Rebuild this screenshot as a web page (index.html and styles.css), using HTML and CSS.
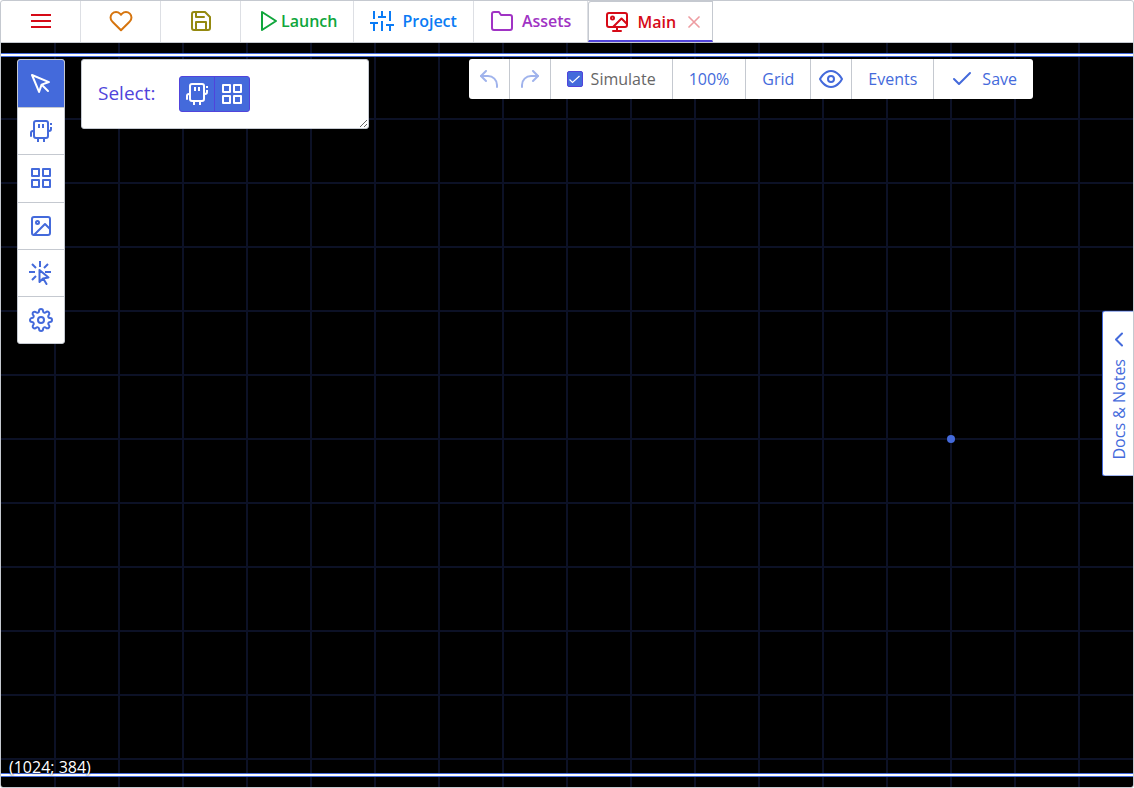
FILE: index.html
```html
<!DOCTYPE html>
<html lang="en">
<head>
<meta charset="utf-8">
<title>Main</title>
<link rel="stylesheet" href="styles.css">
</head>
<body>
<svg class="sprite" aria-hidden="true">
  <symbol id="robot" viewBox="0 0 24 24"><rect x="5" y="2" width="14" height="17" rx="2"/><path d="M5 12H4a2 2 0 0 0-2 2v3"/><path class="flat" d="M10 5v4M14 5v4M9 19v4M15 19v4M19 12h1a2 2 0 0 0 2-2V8M22 4v2"/></symbol>
  <symbol id="grid" viewBox="0 0 24 24"><path d="M3 3h7v7H3zM14 3h7v7h-7zM14 14h7v7h-7zM3 14h7v7H3z"/></symbol>
</svg>
<div class="app">
  <nav class="tabs">
    <button class="tab tab-icon red" aria-label="Menu"><svg class="icon" viewBox="0 0 24 24"><path class="flat" d="M2 6h20M2 12h20M2 18h20"/></svg></button>
    <button class="tab tab-icon orange" aria-label="Patrons"><svg class="icon" viewBox="0 0 24 24"><path d="M20.84 4.61a5.5 5.5 0 0 0-7.78 0L12 5.67l-1.06-1.06a5.5 5.5 0 0 0-7.78 7.78l1.06 1.06L12 21.23l7.78-7.78 1.06-1.06a5.5 5.5 0 0 0 0-7.78z"/></svg></button>
    <button class="tab tab-icon olive" aria-label="Save project"><svg class="icon" viewBox="0 0 24 24"><path d="M19 21H5a2 2 0 0 1-2-2V5a2 2 0 0 1 2-2h11l5 5v11a2 2 0 0 1-2 2z"/><path d="M17 21v-8H7v8M7 3v5h8"/></svg></button>
    <button class="tab tab-launch green"><svg class="icon" viewBox="0 0 24 24"><path d="M5 3l14 9-14 9z"/></svg>Launch</button>
    <button class="tab blue"><svg class="icon" viewBox="0 0 24 24"><path class="flat" d="M4 22v-8M4 10V2M12 22V12M12 8V2M20 22v-6M20 12V2M0 14h8M8 8h8M16 16h8"/></svg>Project</button>
    <button class="tab purple"><svg class="icon" viewBox="0 0 24 24"><path d="M22 19a2 2 0 0 1-2 2H4a2 2 0 0 1-2-2V5a2 2 0 0 1 2-2h5l2 3h9a2 2 0 0 1 2 2z"/></svg>Assets</button>
    <div class="tab tab-active red">
      <button class="tab-title"><svg class="icon" viewBox="0 0 24 24"><rect x="2" y="3" width="20" height="14" rx="2"/><circle cx="7.500" cy="8" r="1.500"/><path d="M8 17l8.500-8.500L22 14M12 17v4M8 21h8"/></svg>Main</button>
      <button class="close" aria-label="Close tab"><svg viewBox="0 0 24 24"><path d="M18 6L6 18M6 6l12 12"/></svg></button>
    </div>
  </nav>

  <main class="stage">
    <div class="camera"></div>
    <div class="origin"></div>

    <aside class="tools">
      <button class="tool active" aria-label="Select"><svg class="icon" viewBox="0 0 24 24"><path d="M3 3l7.070 16.970 2.510-7.390 7.390-2.510z"/><path d="M13 13l6 6"/></svg></button>
      <button class="tool" aria-label="Add copies"><svg class="icon"><use href="#robot"/></svg></button>
      <button class="tool" aria-label="Add tiles"><svg class="icon"><use href="#grid"/></svg></button>
      <button class="tool" aria-label="Backgrounds"><svg class="icon" viewBox="0 0 24 24"><rect x="3" y="3" width="18" height="18" rx="2"/><circle cx="8.500" cy="8.500" r="1.500"/><path d="M21 15l-5-5L5 21"/></svg></button>
      <button class="tool" aria-label="Interface tools"><svg class="icon" viewBox="0 0 24 24"><path class="flat" d="M11 0v6M0 11h6M16 11h6M3 3l4 4M15 7l4-4M3 19l4-4"/><path d="M10.500 9v12l3.500-3.500 5.500-1zM14.500 18l3 5"/></svg></button>
      <button class="tool" aria-label="Room settings"><svg class="icon" viewBox="0 0 24 24"><circle cx="12" cy="12" r="3"/><path d="M19.400 15a1.650 1.650 0 0 0 .33 1.820l.06.06a2 2 0 0 1 0 2.830 2 2 0 0 1-2.830 0l-.06-.06a1.650 1.650 0 0 0-1.820-.33 1.650 1.650 0 0 0-1 1.510V21a2 2 0 0 1-2 2 2 2 0 0 1-2-2v-.09A1.650 1.650 0 0 0 9 19.400a1.650 1.650 0 0 0-1.820.33l-.06.06a2 2 0 0 1-2.830 0 2 2 0 0 1 0-2.830l.06-.06a1.650 1.650 0 0 0 .33-1.820 1.650 1.650 0 0 0-1.510-1H3a2 2 0 0 1-2-2 2 2 0 0 1 2-2h.09A1.650 1.650 0 0 0 4.600 9a1.650 1.650 0 0 0-.33-1.820l-.06-.06a2 2 0 0 1 0-2.830 2 2 0 0 1 2.830 0l.06.06a1.650 1.650 0 0 0 1.820.33H9a1.650 1.650 0 0 0 1-1.510V3a2 2 0 0 1 2-2 2 2 0 0 1 2 2v.09a1.650 1.650 0 0 0 1 1.510 1.650 1.650 0 0 0 1.820-.33l.06-.06a2 2 0 0 1 2.830 0 2 2 0 0 1 0 2.830l-.06.06a1.650 1.650 0 0 0-.33 1.820V9a1.650 1.650 0 0 0 1.510 1H21a2 2 0 0 1 2 2 2 2 0 0 1-2 2h-.09a1.650 1.650 0 0 0-1.510 1z"/></svg></button>
    </aside>

    <section class="options">
      <span class="options-label">Select:</span>
      <div class="segmented">
        <button aria-pressed="true" aria-label="Copies"><svg class="icon"><use href="#robot"/></svg></button>
        <button aria-pressed="true" aria-label="Tiles"><svg class="icon"><use href="#grid"/></svg></button>
      </div>
    </section>

    <div class="toolbar">
      <button class="square" disabled aria-label="Undo"><svg class="icon" viewBox="0 0 24 24"><path d="M9 14L4 9l5-5"/><path d="M20 20v-2a9 9 0 0 0-9-9H4"/></svg></button>
      <button class="square" disabled aria-label="Redo"><svg class="icon" viewBox="0 0 24 24"><path d="M15 14l5-5-5-5"/><path d="M4 20v-2a9 9 0 0 1 9-9h7"/></svg></button>
      <label class="simulate" for="simulate"><input type="checkbox" id="simulate" checked>Simulate</label>
      <button>100%</button>
      <button>Grid</button>
      <button class="square" aria-label="Visibility"><svg class="icon" viewBox="0 0 24 24"><path d="M1 12s4-8 11-8 11 8 11 8-4 8-11 8-11-8-11-8z"/><circle cx="12" cy="12" r="3"/></svg></button>
      <button>Events</button>
      <button><svg class="icon" viewBox="0 0 24 24"><path d="M20 6L9 17l-5-5"/></svg>Save</button>
    </div>

    <button class="docs"><span>Docs &amp; Notes</span><svg class="icon" viewBox="0 0 24 24"><path d="M15 18l-6-6 6-6"/></svg></button>
    <output class="coords">(1024; 384)</output>
  </main>
</div>
</body>
</html>
```
FILE: styles.css
```css
:root {
  --accent: #446adb;
  --accent-2: #5144db;
  --line: #c5c9d0;
  --line-soft: #dddfe4;
  --grid: #0c1126;
}

* { box-sizing: border-box; }

body {
  margin: 0;
  font: 16px/24px "Open Sans", "Noto Sans", sans-serif;
  color: var(--accent);
  background: #fff;
}

button {
  margin: 0;
  padding: 0;
  border: 0;
  background: none;
  font: inherit;
  color: inherit;
}

svg {
  fill: none;
  stroke: currentColor;
  stroke-width: 2;
  stroke-linecap: round;
  stroke-linejoin: round;
}

.sprite { position: absolute; width: 0; height: 0; }
.icon { display: block; flex: none; width: 24px; height: 24px; }
.flat { stroke-linecap: butt; }

.app {
  display: flex;
  flex-direction: column;
  height: 100vh;
  border: 1px solid var(--line);
  border-radius: 3px;
  overflow: hidden;
}

/* Tab strip */
.tabs {
  display: flex;
  height: 42px;
  border-bottom: 1px solid var(--line);
  font-weight: 600;
}

.tab {
  display: flex;
  align-items: center;
  gap: 8px;
  padding: 0 16px 2px;
  border-right: 1px solid var(--line-soft);
}

.tab-icon { justify-content: center; width: 80px; }
.tab-launch { gap: 0; }

.tab-active {
  border: 1px solid var(--line);
  border-bottom: 2px solid var(--accent-2);
  border-top-left-radius: 3px;
  padding: 2px 8px 0 16px;
}

.tab-title { display: flex; align-items: center; gap: 8px; }
.close { opacity: 0.4; }
.close svg { display: block; width: 20px; height: 20px; }

.red { color: #d60a17; }
.orange { color: #d6750f; }
.olive { color: #94890f; }
.green { color: #10a63c; }
.blue { color: #0a7bf5; }
.purple { color: #a033c4; }

/* Room canvas */
.stage {
  position: relative;
  flex: 1;
  min-height: 0;
  overflow: hidden;
  background:
    linear-gradient(90deg, var(--grid) 2px, transparent 2px) 53px 0 / 64px 64px,
    linear-gradient(var(--grid) 2px, transparent 2px) 0 11px / 64px 64px,
    #000;
}

.camera {
  position: absolute;
  inset: 10px -8px;
  border: 1px solid var(--accent);
}

.camera::before {
  content: "";
  position: absolute;
  inset: 0;
  border: 2px solid #fff;
  outline: 1px solid var(--accent);
  outline-offset: -3px;
}

.origin {
  position: absolute;
  left: 946px;
  top: 392px;
  width: 8px;
  height: 8px;
  border-radius: 50%;
  background: var(--accent);
}

.tools {
  position: absolute;
  left: 16px;
  top: 16px;
  display: grid;
  grid-auto-rows: 1fr;
  width: 48px;
  height: 285px;
  border: 1px solid var(--line);
  border-radius: 3px;
  background: #fff;
  overflow: hidden;
}

.tool { display: grid; place-items: center; }
.tool + .tool { border-top: 1px solid var(--line); }
.tool.active { background: var(--accent); color: #fff; }

.options {
  position: absolute;
  left: 80px;
  top: 16px;
  display: flex;
  align-items: center;
  gap: 24px;
  width: 288px;
  padding: 16px;
  border: 1px solid var(--line);
  border-radius: 3px;
  background: #fff;
  overflow: auto;
  resize: both;
}

.options-label { padding-bottom: 2px; font-size: 19px; color: var(--accent-2); }

.segmented {
  display: flex;
  border: 1px solid var(--accent-2);
  border-radius: 3px;
  background: var(--accent);
  color: #fff;
}

.segmented button { padding: 5px; }
.segmented button + button { border-left: 1px solid var(--accent-2); }

.toolbar {
  position: absolute;
  right: 100px;
  top: 16px;
  display: flex;
  height: 40px;
  border-radius: 3px;
  background: #fff;
}

.toolbar > * {
  display: flex;
  align-items: center;
  gap: 8px;
  padding: 0 16px;
}

.toolbar > * + * { border-left: 1px solid var(--line); }
.toolbar .square { padding: 0 8px; }
.toolbar button:disabled .icon { opacity: 0.5; }
.toolbar .simulate { color: #666; }

.simulate input {
  appearance: none;
  width: 16px;
  height: 16px;
  margin: 0;
  border: 1px solid var(--accent-2);
  border-radius: 2px;
}

.simulate input:checked {
  background: var(--accent) url("data:image/svg+xml,%3Csvg xmlns='http://www.w3.org/2000/svg' viewBox='0 0 14 14'%3E%3Cpath d='M1.500 7.500l3 3 7-6.500' fill='none' stroke='white' stroke-width='1.200'/%3E%3C/svg%3E");
}

.docs {
  position: absolute;
  right: 0;
  top: 267px;
  display: flex;
  align-items: center;
  gap: 8px;
  min-height: 166px;
  padding: 16px 4px 16px 2px;
  border: 1px solid var(--accent);
  border-left: 0;
  border-radius: 0 3px 3px 0;
  background: #fff;
  writing-mode: vertical-rl;
  transform: rotate(180deg);
}

.docs .icon { transform: rotate(180deg); }

.coords {
  position: absolute;
  left: 8px;
  bottom: 8px;
  color: #fff;
  text-shadow: 0 0 2px #000;
}
```
